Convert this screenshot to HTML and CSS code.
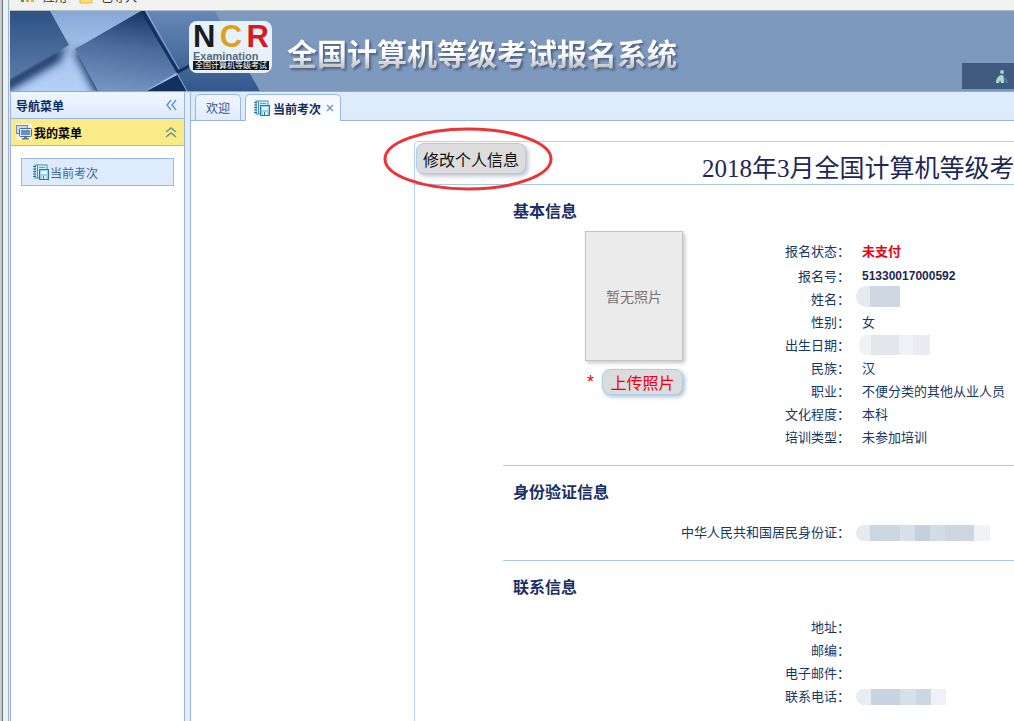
FILE: index.html
```
<!DOCTYPE html>
<html lang="zh-CN">
<head>
    <meta charset="UTF-8">
    <meta name="viewport" content="width=device-width, initial-scale=1.0">
    <title>全国计算机等级考试报名系统</title>
    <link rel="stylesheet" href="styles.css">
</head>
<body>
    <!-- 公用图标 -->
    <svg class="icon-defs" aria-hidden="true">
        <symbol id="icon-book" viewBox="0 0 16 16">
            <rect x="2" y="1" width="12" height="13" fill="#d3eefb" stroke="#3f8fb9"/>
            <path d="M4.500 1v13" stroke="#3f8fb9"/>
            <path d="M0 2.500h3M0 5h3M0 7.500h3M0 10h3M0 12.500h3" stroke="#376e91"/>
            <path d="M6 3.500h6" stroke="#53a6cf"/>
            <rect x="6.500" y="5.500" width="9" height="10" fill="#8fd3f3" stroke="#2479a8"/>
            <rect x="8" y="7" width="6" height="3" fill="#eefaff"/>
            <rect x="9" y="12" width="4" height="3" fill="#eefaff"/>
            <path d="M10 12h1v3h-1z" fill="#2479a8"/>
        </symbol>
    </svg>

    <div class="window-edge"></div>

    <div class="app">
        <div class="bookmarks">
            <a href="#" class="bookmark-apps">
                <svg width="15" height="12" viewBox="0 0 15 12" aria-hidden="true">
                    <path d="M1 4h3v4H1z" fill="#4e9f47"/><path d="M6 2h3v6H6z" fill="#d9a22a"/><path d="M11 3h3v5h-3z" fill="#e0b13c"/>
                </svg>
                <span>应用</span>
            </a>
            <a href="#">
                <svg width="14" height="12" viewBox="0 0 14 12" aria-hidden="true"><path d="M1 1h12v8H1z" fill="#f8dc78" stroke="#e7bb3c"/></svg>
                <span>已导入</span>
            </a>
        </div>

        <header class="banner">
            <svg class="banner-art" width="255" height="80" viewBox="0 0 255 80" aria-hidden="true">
                <defs>
                    <linearGradient id="light" x1="0" y1="0" x2="0" y2="1">
                        <stop offset="0" stop-color="#86a9d8"/><stop offset=".5" stop-color="#a6c3ec"/><stop offset="1" stop-color="#b5d0f6"/>
                    </linearGradient>
                    <linearGradient id="tileLeft" x1="0" y1="0" x2="0" y2="1">
                        <stop offset="0" stop-color="#2e5184"/><stop offset="1" stop-color="#5a7ba8"/>
                    </linearGradient>
                    <linearGradient id="tileMid" x1=".6" y1="0" x2=".4" y2="1">
                        <stop offset="0" stop-color="#173766"/><stop offset=".45" stop-color="#4b6c9b"/><stop offset="1" stop-color="#7494c1"/>
                    </linearGradient>
                    <linearGradient id="tileRight" x1="0" y1="0" x2="0" y2="1">
                        <stop offset="0" stop-color="#6688b8"/><stop offset="1" stop-color="#34588c"/>
                    </linearGradient>
                    <filter id="soft" x="-20%" y="-20%" width="140%" height="140%"><feGaussianBlur stdDeviation="4"/></filter>
                </defs>
                <path d="M0 0h205l45 80H0z" fill="url(#light)"/>
                <path d="M-8 70L57 32L50 50L-8 84z" fill="#143362" filter="url(#soft)"/>
                <path d="M64 40L74 38L104 84H86z" fill="#143362" filter="url(#soft)"/>
                <path d="M0 0h40l19 34L0 68z" fill="url(#tileLeft)"/>
                <path d="M65 38L131 0h4l34 60L137 80H88z" fill="url(#tileMid)"/>
                <path d="M137 0h68l45 80h-78l-5-16z" fill="url(#tileRight)"/>
                <path d="M137 80l30-16 9 16z" fill="#12315f"/>
                <path d="M132 0l36 61 37-20" fill="none" stroke="#14305c" stroke-width="3"/>
                <path d="M136 0l33 58M137 79l30-17 10 18" fill="none" stroke="#87a8d5"/>
            </svg>
            <div class="logo">
                <div class="logo-mark"><span class="n">N</span><span class="c">C</span><span class="r">R</span></div>
                <div class="logo-name">Examination</div>
                <div class="logo-strip">全国计算机等级考试</div>
            </div>
            <h1>全国计算机等级考试报名系统</h1>
            <div class="user-bar">
                <svg width="14" height="16" viewBox="0 0 14 16" aria-hidden="true">
                    <circle cx="7" cy="3" r="2" fill="#9fd6c2"/>
                    <path d="M1 14c0-5 3-8 6-8 2 0 2 3 2 8H6l-1-3-1 3z" fill="#a9dcc4"/>
                    <path d="M10 9l2 5" stroke="#4d86b4" stroke-width="2"/>
                </svg>
            </div>
        </header>

        <div class="workspace">
            <nav class="sidebar">
                <div class="side-title">
                    <span>导航菜单</span>
                    <button type="button" class="fold" aria-label="收起导航">
                        <svg width="12" height="12" viewBox="0 0 12 12"><path d="M6 1L2 6l4 5M11 1L7 6l4 5" fill="none" stroke="#5f9ad6" stroke-width="1.500"/></svg>
                    </button>
                </div>
                <div class="side-group">
                    <svg width="16" height="16" viewBox="0 0 16 16" aria-hidden="true">
                        <path d="M0 0h16v16H0z" fill="#f6f3e1"/>
                        <rect x=".5" y="1.500" width="11" height="8" fill="#cbd8e8" stroke="#7189a8"/>
                        <rect x="3.500" y="4.500" width="12" height="8" rx="1" fill="#e1eaf4" stroke="#4d6b91"/>
                        <rect x="5" y="6" width="9" height="5" fill="#5e91cc"/>
                        <path d="M8 13h3v1h2v1.500H6V14h2z" fill="#64758d"/>
                    </svg>
                    <span>我的菜单</span>
                    <button type="button" class="fold" aria-label="收起菜单">
                        <svg width="12" height="12" viewBox="0 0 12 12"><path d="M1 6l5-4 5 4M1 11l5-4 5 4" fill="none" stroke="#5f9596" stroke-width="1.500"/></svg>
                    </button>
                </div>
                <a href="#" class="side-item">
                    <svg width="16" height="16"><use href="#icon-book"/></svg>
                    <span>当前考次</span>
                </a>
            </nav>

            <main class="main">
                <div class="tabs">
                    <a href="#" class="tab">欢迎</a>
                    <div class="tab active">
                        <svg width="16" height="16"><use href="#icon-book"/></svg>
                        <a href="#">当前考次</a>
                        <button type="button" class="close" aria-label="关闭">
                            <svg width="8" height="8" viewBox="0 0 8 8"><path d="M1 1l6 6M7 1L1 7" stroke="#7698cf" stroke-width="1.500"/></svg>
                        </button>
                    </div>
                </div>

                <div class="panel">
                    <div class="panel-head">
                        <button type="button" class="btn btn-edit">修改个人信息</button>
                        <h2>2018年3月全国计算机等级考试</h2>
                        <svg class="circle-mark" width="170" height="64" viewBox="0 0 170 64" aria-hidden="true">
                            <ellipse cx="85" cy="32" rx="83" ry="30" fill="none" stroke="#ee3337" stroke-width="3"/>
                        </svg>
                    </div>

                    <section class="info">
                        <h3>基本信息</h3>
                        <div class="basic">
                            <div class="photo-box">
                                <div class="photo">暂无照片</div>
                                <div class="upload">
                                    <span class="required">*</span>
                                    <button type="button" class="btn btn-upload">上传照片</button>
                                </div>
                            </div>
                            <dl class="fields">
                                <dt class="first">报名状态：</dt><dd class="first unpaid">未支付</dd>
                                <dt>报名号：</dt><dd class="number">51330017000592</dd>
                                <dt>姓名：</dt><dd><span class="mask mask-name"></span></dd>
                                <dt>性别：</dt><dd>女</dd>
                                <dt>出生日期：</dt><dd><span class="mask mask-birth"></span></dd>
                                <dt>民族：</dt><dd>汉</dd>
                                <dt>职业：</dt><dd>不便分类的其他从业人员</dd>
                                <dt>文化程度：</dt><dd>本科</dd>
                                <dt>培训类型：</dt><dd>未参加培训</dd>
                            </dl>
                        </div>
                    </section>

                    <section class="info">
                        <h3>身份验证信息</h3>
                        <dl class="fields">
                            <dt>中华人民共和国居民身份证：</dt><dd><span class="mask mask-id"></span></dd>
                        </dl>
                    </section>

                    <section class="info">
                        <h3>联系信息</h3>
                        <dl class="fields">
                            <dt>地址：</dt><dd></dd>
                            <dt>邮编：</dt><dd></dd>
                            <dt>电子邮件：</dt><dd></dd>
                            <dt>联系电话：</dt><dd><span class="mask mask-phone"></span></dd>
                        </dl>
                    </section>
                </div>
            </main>
        </div>
    </div>
</body>
</html>
```

FILE: styles.css
```
* {
    box-sizing: border-box;
}

body {
    margin: 0;
    height: 100vh;
    display: flex;
    overflow: hidden;
    background: #fff;
    color: #0e2d5f;
    font-family: "Liberation Sans", "Noto Sans CJK SC", sans-serif;
    font-size: 12px;
}

h1, h2, h3, dl, dd {
    margin: 0;
}

a {
    color: inherit;
    text-decoration: none;
}

button {
    padding: 0;
    border: none;
    background: none;
    font-family: inherit;
    cursor: pointer;
}

svg {
    display: block;
    flex-shrink: 0;
}

.icon-defs {
    position: absolute;
    width: 0;
    height: 0;
}

/* 窗口左侧边框 */
.window-edge {
    flex: 0 0 10px;
    background: linear-gradient(to right, #c9cacb 2px, #6d7274 2px, #6d7274 3px, #e9f0f2 3px, #e9f0f2 8px, #a3b4ca 8px, #a3b4ca 9px, #dce9f8 9px);
}

.app {
    flex: 1;
    min-width: 0;
    display: flex;
    flex-direction: column;
}

/* 书签栏 */
.bookmarks {
    flex: 0 0 11px;
    display: flex;
    align-items: flex-end;
    gap: 12px;
    padding: 0 10px 4px;
    overflow: hidden;
    background: #f1f2f0;
    border-bottom: 1px solid #b4bdc6;
    color: #333;
    line-height: 16px;
}

.bookmarks a {
    display: flex;
    align-items: flex-end;
    gap: 8px;
}

/* 顶部横幅 */
.banner {
    position: relative;
    flex: 0 0 81px;
    display: flex;
    align-items: flex-start;
    padding-left: 179px;
    background: #7e99be;
    border-bottom: 1px solid #8da9d4;
}

.banner-art {
    position: absolute;
    left: 0;
    top: 0;
}

.logo {
    position: relative;
    width: 83px;
    height: 52px;
    padding: 1px 3px 0 4px;
    margin-top: 10px;
    border-radius: 8px;
    background: #e6f2f9;
}

.logo-mark {
    display: flex;
    justify-content: space-between;
    font-size: 31px;
    font-weight: bold;
    line-height: 29px;
}

.logo-mark .n {
    color: #1b1b1d;
}

.logo-mark .c {
    color: #dfa11c;
}

.logo-mark .r {
    color: #dc1723;
}

.logo-name {
    color: #566a83;
    font-size: 11px;
    font-weight: bold;
    line-height: 10px;
}

.logo-strip {
    background: #16181b;
    color: #fff;
    font-size: 8px;
    line-height: 9px;
    text-align: center;
    white-space: nowrap;
}

.banner h1 {
    margin: 24px 0 0 15px;
    font-size: 30px;
    line-height: 40px;
    white-space: nowrap;
    color: transparent;
    background: linear-gradient(#fff 45%, #c4c4c4 80%);
    -webkit-background-clip: text;
    background-clip: text;
    filter: drop-shadow(2px 2px 1px #4d6283);
}

.user-bar {
    width: 52px;
    height: 26px;
    margin: 52px 0 0 auto;
    padding: 6px 0 0 33px;
    background: #405a80;
}

.workspace {
    flex: 1;
    min-height: 0;
    display: flex;
}

/* 左侧导航 */
.sidebar {
    flex: 0 0 175px;
    border: 1px solid #99b6df;
    border-width: 0 1px;
}

.side-title,
.side-group {
    display: flex;
    align-items: center;
    height: 27px;
    padding: 0 7px 0 5px;
    border-bottom: 1px solid #9db9df;
    font-weight: bold;
}

.side-title {
    background: linear-gradient(#f0f6ff, #deeafb);
}

.side-group {
    gap: 2px;
    background: #fbeb86;
    color: #000;
}

.fold {
    margin-left: auto;
}

.side-item {
    display: flex;
    align-items: center;
    gap: 1px;
    height: 28px;
    margin: 12px 10px;
    padding-left: 11px;
    border: 1px solid #99b9e2;
    background: #deebfd;
    color: #41639a;
}

/* 主区域 */
.main {
    flex: 1;
    min-width: 0;
    margin-left: 5px;
    border-left: 1px solid #99b6df;
    overflow: hidden;
    box-shadow: -5px 0 0 #e3eefd;
}

.tabs {
    display: flex;
    align-items: flex-end;
    gap: 4px;
    height: 29px;
    padding-left: 4px;
    background: #deebfd;
    border-bottom: 1px solid #9bb5da;
}

.tab {
    display: flex;
    align-items: center;
    height: 26px;
    padding: 0 10px;
    border: 1px solid #95b8e7;
    border-bottom: none;
    border-radius: 5px 5px 0 0;
    background: linear-gradient(#eff5ff, #e0ecff);
    color: #3b4f86;
}

.tab.active {
    gap: 3px;
    height: 27px;
    margin-bottom: -1px;
    padding: 0 6px 0 8px;
    background: linear-gradient(#f2f7ff, #fff);
    color: #0e2d5f;
    font-weight: bold;
}

.close {
    margin-left: 2px;
}

.panel {
    margin: 20px 0 0 223px;
    border: 1px solid #b4d2ee;
    border-width: 1px 0 0 1px;
    border-radius: 5px 0 0 0;
}

.panel-head {
    position: relative;
    display: flex;
    align-items: flex-start;
    height: 43px;
    padding: 1px;
    border-bottom: 1px solid #a9c9e8;
}

.panel-head h2 {
    margin-left: 176px;
    color: #1d2858;
    font-family: "Liberation Serif", "Noto Sans CJK SC", serif;
    font-size: 25px;
    font-weight: normal;
    line-height: 52px;
    white-space: nowrap;
}

.btn {
    border: 1px solid #a9cdec;
    border-radius: 8px;
    background: #dcdcdc;
    box-shadow: 2px 2px 4px #b3bfcc;
    font-size: 16px;
    white-space: nowrap;
}

.btn-edit {
    flex-shrink: 0;
    width: 110px;
    height: 31px;
    color: #111;
}

.btn-upload {
    width: 81px;
    height: 26px;
    color: #f00014;
}

/* 红色圈注 */
.circle-mark {
    position: absolute;
    left: -32px;
    top: -15px;
}

/* 信息分组 */
.info {
    margin-left: 88px;
    padding: 16px 0;
    border-bottom: 1px solid #a6cbe8;
}

.info:last-child {
    border-bottom: none;
}

.info h3 {
    padding-left: 10px;
    color: #1a2f66;
    font-size: 16px;
    line-height: 22px;
}

.basic {
    display: flex;
}

.photo-box {
    flex: 0 0 180px;
    padding: 8px 0 0 82px;
}

.photo {
    display: flex;
    align-items: center;
    justify-content: center;
    height: 130px;
    border: 1px solid #c4c4c4;
    background: #ebebeb;
    box-shadow: 2px 2px 4px #c4c4c4;
    color: #757575;
    font-size: 14px;
}

.upload {
    display: flex;
    align-items: center;
    justify-content: flex-end;
    gap: 8px;
    margin-top: 8px;
}

.required {
    color: #e60012;
    font-size: 18px;
    line-height: 18px;
}

.fields {
    display: grid;
    grid-template-columns: 347px auto;
    justify-content: start;
    column-gap: 12px;
    padding-top: 17px;
    color: #16375f;
    font-size: 13px;
    line-height: 23px;
    white-space: nowrap;
}

.basic .fields {
    grid-template-columns: 167px auto;
}

.fields dt {
    text-align: right;
}

.fields dt,
.fields dd {
    height: 23px;
}

.fields .first {
    height: 25px;
}

.unpaid {
    color: #f00014;
    font-weight: bold;
}

.number {
    color: #1c2853;
    font-size: 12px;
    font-weight: bold;
}

/* 隐私遮挡 */
.mask {
    display: block;
    height: 16px;
    margin: 4px 0 0 -6px;
    border-radius: 8px 0 0 8px;
}

.mask-name {
    width: 44px;
    height: 21px;
    margin-top: -2px;
    border-radius: 10px 0 0 10px;
    background: linear-gradient(to right, #e6ebf1 14px, #cdd8e3 14px);
}

.mask-birth {
    width: 71px;
    height: 20px;
    margin: 1px 0 0 -3px;
    background: linear-gradient(to right, #f0f2f4 12px, #e3e7ec 12px, #e3e7ec 40px, #f0f2f6 40px, #f0f2f6 54px, #e9edf1 54px);
}

.mask-id {
    width: 134px;
    background: linear-gradient(to right, #e6e9ed 14px, #ccd6e0 14px, #ccd6e0 44px, #d7dfe8 44px, #d7dfe8 59px, #c5d0df 59px, #c5d0df 74px, #d3dbe5 74px, #d3dbe5 89px, #ccd5e0 89px, #ccd5e0 118px, #f0f3f6 118px);
}

.mask-phone {
    width: 90px;
    background: linear-gradient(to right, #e9ecf1 15px, #c9d3e1 15px, #c9d3e1 44px, #d5e0e9 44px, #d5e0e9 60px, #cbd7e1 60px, #cbd7e1 75px, #eef2f6 75px);
}
```
